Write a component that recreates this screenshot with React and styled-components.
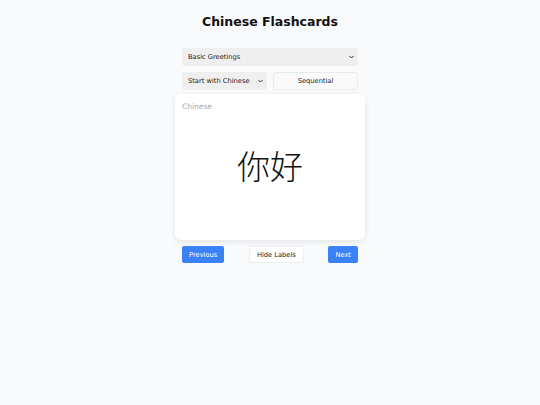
import React, { useState } from 'react';
import styled, { createGlobalStyle } from 'styled-components';

const GlobalStyle = createGlobalStyle`
  body {
    margin: 0;
    background: #f8fafc;
    font-family: "DejaVu Sans", "Noto Sans CJK SC", sans-serif;
  }
`;

const Page = styled.div`
  min-height: 405px;
  display: flex;
  flex-direction: column;
  align-items: center;
  padding-top: 14px;
  box-sizing: border-box;
`;

const Title = styled.h1`
  margin: 0 0 18px;
  font-size: 12.5px;
  line-height: 16px;
  font-weight: 700;
  color: #111;
`;

const Panel = styled.div`
  width: 176px;
  display: flex;
  flex-direction: column;
  gap: 6px;
`;

const Row = styled.div`
  display: grid;
  grid-template-columns: minmax(0, 1fr) minmax(0, 1fr);
  gap: 6px;
`;

const SelectWrap = styled.div`
  position: relative;
  min-width: 0;
  display: flex;

  svg {
    position: absolute;
    right: 4px;
    top: 7px;
    pointer-events: none;
  }
`;

const Select = styled.select`
  appearance: none;
  -webkit-appearance: none;
  width: 100%;
  min-width: 0;
  height: 18px;
  margin: 0;
  padding: 0 6px;
  border: none;
  border-radius: 3px;
  background: #efefef;
  font-family: inherit;
  font-size: 6.7px;
  color: #222;
  outline: none;
`;

const ModeButton = styled.button`
  width: 100%;
  height: 18px;
  border: 1px solid #e8eaee;
  border-radius: 3px;
  background: #fafafa;
  font-family: inherit;
  font-size: 6.7px;
  color: #222;
`;

const Card = styled.div`
  margin: -2px -7px 0;
  height: 146px;
  background: #fff;
  border-radius: 6px;
  box-shadow: 0 2px 6px rgba(0, 0, 0, 0.09);
  padding: 8px 7px;
  box-sizing: border-box;
  display: flex;
  flex-direction: column;
`;

const Label = styled.div`
  font-size: 7.5px;
  color: #a3a8b0;
`;

const Word = styled.div`
  flex: 1;
  display: flex;
  align-items: center;
  justify-content: center;
  padding-bottom: 14px;
  font-family: "Noto Sans CJK SC", sans-serif;
  font-weight: 300;
  font-size: 33px;
  color: #111;
`;

const Controls = styled.div`
  display: flex;
  justify-content: space-between;
  align-items: center;
`;

const NavButton = styled.button`
  height: 17px;
  padding: 0 7px;
  border: none;
  border-radius: 2px;
  background: #3b82f6;
  color: #fff;
  font-family: inherit;
  font-size: 6.7px;
`;

const ToggleButton = styled.button`
  height: 17px;
  padding: 0 7px;
  border: 1px solid #eceef1;
  border-radius: 2px;
  background: #fff;
  color: #222;
  font-family: inherit;
  font-size: 6.7px;
`;

const Chevron = () => (
  <svg width="5" height="4" viewBox="0 0 10 6" fill="none">
    <path d="M1 1l4 4 4-4" stroke="#333" strokeWidth="2" />
  </svg>
);

export default function App() {
  const [showLabels, setShowLabels] = useState(true);

  return (
    <>
      <GlobalStyle />
      <Page>
        <Title>Chinese Flashcards</Title>
        <Panel>
          <SelectWrap>
            <Select defaultValue="greetings">
              <option value="greetings">Basic Greetings</option>
            </Select>
            <Chevron />
          </SelectWrap>
          <Row>
            <SelectWrap>
              <Select defaultValue="zh">
                <option value="zh">Start with Chinese</option>
                <option value="en">Start with English</option>
              </Select>
              <Chevron />
            </SelectWrap>
            <ModeButton>Sequential</ModeButton>
          </Row>
          <Card>
            <Label>{showLabels ? 'Chinese' : '\u00a0'}</Label>
            <Word>你好</Word>
          </Card>
          <Controls>
            <NavButton>Previous</NavButton>
            <ToggleButton onClick={() => setShowLabels(!showLabels)}>
              {showLabels ? 'Hide Labels' : 'Show Labels'}
            </ToggleButton>
            <NavButton>Next</NavButton>
          </Controls>
        </Panel>
      </Page>
    </>
  );
}
